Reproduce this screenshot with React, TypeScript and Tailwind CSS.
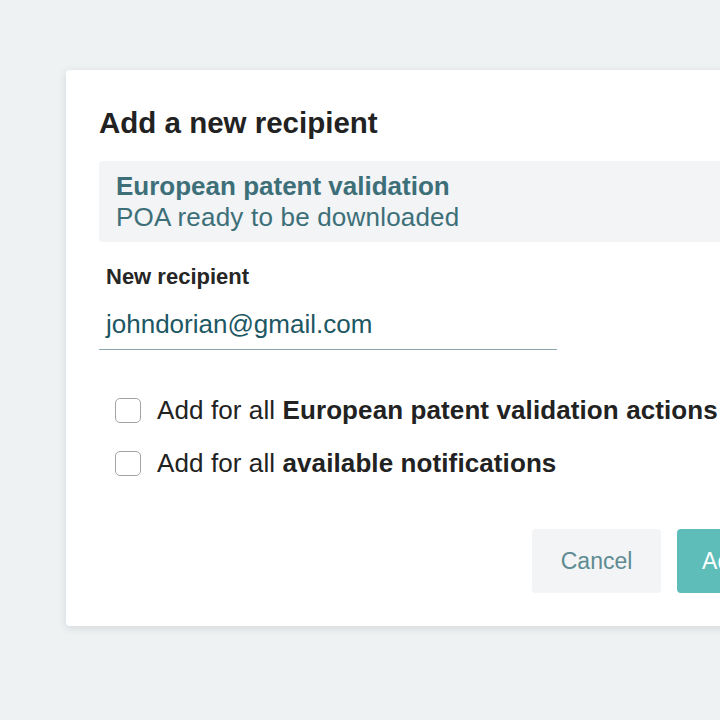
const options = [
  { plain: "Add for all ", bold: "European patent validation actions" },
  { plain: "Add for all ", bold: "available notifications" },
];

const Checkbox = () => (
  <span className="block w-[26px] h-[25px] shrink-0 rounded-[5px] border-[1.5px] border-[#a3a3a3] bg-white" />
);

export default function App() {
  return (
    <div
      className="w-[720px] h-[720px] overflow-hidden bg-[#eff2f3] pt-[70px]"
      style={{ fontFamily: '"Liberation Sans", Arial, sans-serif' }}
    >
      <div className="ml-[66px] w-[735px] bg-white rounded-[4px] shadow-[0_2px_8px_rgba(40,60,70,0.14)] pt-[36px] pb-[33px] pl-[33px] pr-[33px]">
        <h2 className="text-[29.5px] leading-[34px] font-bold text-[#222]">
          Add a new recipient
        </h2>

        <div className="mt-[21px] bg-[#f2f4f5] rounded-[4px] pl-[17px] pt-[10px] pb-[9px] text-[26px] leading-[31px] text-[#3d6f79]">
          <div className="font-bold">European patent validation</div>
          <div className="tracking-[0.2px]">POA ready to be downloaded</div>
        </div>

        <label className="block mt-[22px] pl-[7px] text-[22px] leading-[26px] font-semibold text-[#262626]">
          New recipient
        </label>
        <div className="mt-[19px] w-[458px] pl-[7px] pb-[10px] border-b-[1.5px] border-[#8aa7af] text-[26px] leading-[30px] text-[#1d5764]">
          johndorian@gmail.com
        </div>

        <div className="mt-[45px] flex flex-col gap-[23px] pl-[16px]">
          {options.map((o, i) => (
            <div key={i} className="flex items-center gap-[16px] text-[26px] leading-[30px] text-[#222] whitespace-nowrap">
              <Checkbox />
              <span className="tracking-[0.1px]">
                {o.plain}
                <span className="font-bold">{o.bold}</span>
              </span>
            </div>
          ))}
        </div>

        <div className="mt-[51px] flex justify-end gap-[16px]">
          <button className="h-[64px] w-[129px] rounded-[4px] bg-[#f2f4f5] text-[23px] text-[#5e8b92]">
            Cancel
          </button>
          <button className="h-[64px] px-[25px] rounded-[4px] bg-[#5fbdb9] text-[23px] text-white">
            Add
          </button>
        </div>
      </div>
    </div>
  );
}
